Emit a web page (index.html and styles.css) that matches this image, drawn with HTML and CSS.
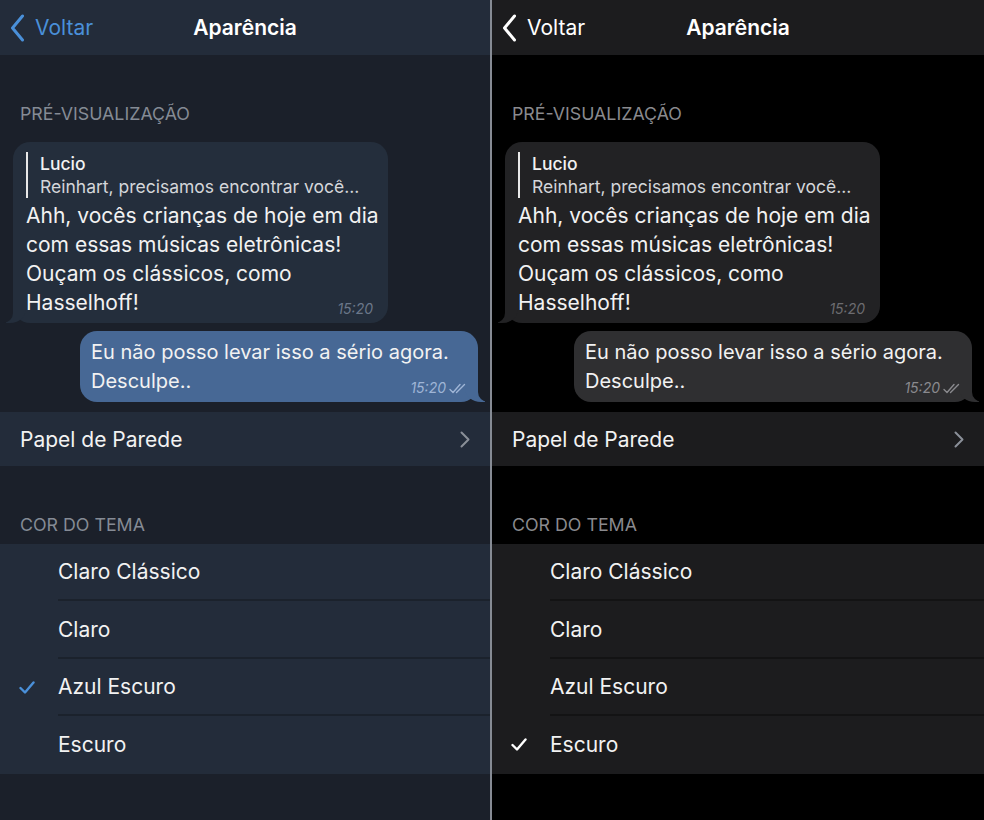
FILE: index.html
```html
<!DOCTYPE html>
<html lang="pt">
<head>
  <meta charset="UTF-8">
  <meta name="viewport" content="width=device-width, initial-scale=1.0">
  <title>Aparência</title>
  <link rel="stylesheet" href="styles.css">
</head>
<body>
  <div class="screen">
    <section class="panel theme-blue">
      <header class="nav">
        <a class="back" href="#">
          <svg width="15" height="28" viewBox="0 0 15 28"><path d="M12.5 2 L2.5 14 L12.5 26" fill="none" stroke="currentColor" stroke-width="3" stroke-linecap="round" stroke-linejoin="round"/></svg>
          Voltar
        </a>
        <h1>Aparência</h1>
        <span></span>
      </header>

      <div class="section-title first">PRÉ-VISUALIZAÇÃO</div>
      <div class="chat">
        <div class="bubble in">
          <div class="reply">
            <div class="reply-name">Lucio</div>
            <div class="reply-text">Reinhart, precisamos encontrar você...</div>
          </div>
          <div class="msg">Ahh, vocês crianças de hoje em dia<br>com essas músicas eletrônicas!<br>Ouçam os clássicos, como<br>Hasselhoff!</div>
          <span class="time">15:20</span>
        </div>
        <div class="bubble out">
          <div class="msg">Eu não posso levar isso a sério agora.<br>Desculpe..</div>
          <span class="time">15:20
            <svg width="19" height="11" viewBox="0 0 19 11"><path d="M1 6.5 L4 9.5 L11 1.5 M7.5 9.5 L15.5 1.5" fill="none" stroke="currentColor" stroke-width="1.4" stroke-linecap="round" stroke-linejoin="round"/></svg>
          </span>
        </div>
      </div>

      <div class="row link">
        <span>Papel de Parede</span>
        <svg width="10" height="17" viewBox="0 0 10 17"><path d="M1.5 1.5 L8.5 8.5 L1.5 15.5" fill="none" stroke="currentColor" stroke-width="2" stroke-linecap="round" stroke-linejoin="round"/></svg>
      </div>

      <div class="section-title">COR DO TEMA</div>
      <ul class="themes">
        <li><span class="check"></span><span class="label">Claro Clássico</span></li>
        <li><span class="check"></span><span class="label">Claro</span></li>
        <li class="selected"><span class="check"><svg width="16" height="13" viewBox="0 0 16 13"><path d="M1.5 7 L6 11.5 L14.5 1.5" fill="none" stroke="currentColor" stroke-width="2.4" stroke-linecap="round" stroke-linejoin="round"/></svg></span><span class="label">Azul Escuro</span></li>
        <li><span class="check"></span><span class="label">Escuro</span></li>
      </ul>
    </section>

    <div class="divider"></div>

    <section class="panel theme-dark">
      <header class="nav">
        <a class="back" href="#">
          <svg width="15" height="28" viewBox="0 0 15 28"><path d="M12.5 2 L2.5 14 L12.5 26" fill="none" stroke="currentColor" stroke-width="3" stroke-linecap="round" stroke-linejoin="round"/></svg>
          Voltar
        </a>
        <h1>Aparência</h1>
        <span></span>
      </header>

      <div class="section-title first">PRÉ-VISUALIZAÇÃO</div>
      <div class="chat">
        <div class="bubble in">
          <div class="reply">
            <div class="reply-name">Lucio</div>
            <div class="reply-text">Reinhart, precisamos encontrar você...</div>
          </div>
          <div class="msg">Ahh, vocês crianças de hoje em dia<br>com essas músicas eletrônicas!<br>Ouçam os clássicos, como<br>Hasselhoff!</div>
          <span class="time">15:20</span>
        </div>
        <div class="bubble out">
          <div class="msg">Eu não posso levar isso a sério agora.<br>Desculpe..</div>
          <span class="time">15:20
            <svg width="19" height="11" viewBox="0 0 19 11"><path d="M1 6.5 L4 9.5 L11 1.5 M7.5 9.5 L15.5 1.5" fill="none" stroke="currentColor" stroke-width="1.4" stroke-linecap="round" stroke-linejoin="round"/></svg>
          </span>
        </div>
      </div>

      <div class="row link">
        <span>Papel de Parede</span>
        <svg width="10" height="17" viewBox="0 0 10 17"><path d="M1.5 1.5 L8.5 8.5 L1.5 15.5" fill="none" stroke="currentColor" stroke-width="2" stroke-linecap="round" stroke-linejoin="round"/></svg>
      </div>

      <div class="section-title">COR DO TEMA</div>
      <ul class="themes">
        <li><span class="check"></span><span class="label">Claro Clássico</span></li>
        <li><span class="check"></span><span class="label">Claro</span></li>
        <li><span class="check"></span><span class="label">Azul Escuro</span></li>
        <li class="selected"><span class="check"><svg width="16" height="13" viewBox="0 0 16 13"><path d="M1.5 7 L6 11.5 L14.5 1.5" fill="none" stroke="currentColor" stroke-width="2.4" stroke-linecap="round" stroke-linejoin="round"/></svg></span><span class="label">Escuro</span></li>
      </ul>
    </section>
  </div>
</body>
</html>
```

FILE: styles.css
```css
* { margin: 0; padding: 0; box-sizing: border-box; }
body {
  font-family: Inter, "Liberation Sans", Arial, sans-serif;
  background: #000;
  color: #f2f2f2;
}
.screen {
  display: flex;
  width: 984px;
  height: 820px;
}

/* themes */
.theme-blue {
  --bg: #1b202a;
  --bar: #232c3a;
  --in: #242e3c;
  --out: #476895;
  --accent: #4a90d9;
  --hint: #858b95;
  --time-in: #6b7789;
  --time-out: #9fb5d6;
  --sep: #1b222c;
  --back: #4a90d9;
  width: 490px;
}
.theme-dark {
  --bg: #000000;
  --bar: #1c1c1e;
  --in: #222224;
  --out: #2f2f31;
  --accent: #ffffff;
  --hint: #8a8a8e;
  --time-in: #6c6c70;
  --time-out: #8a8a8e;
  --sep: #131314;
  --back: #ffffff;
  width: 492px;
}
.panel {
  background: var(--bg);
  height: 820px;
  overflow: hidden;
}
.divider {
  width: 2px;
  background: #868b94;
}

/* nav */
.nav {
  height: 55px;
  background: var(--bar);
  display: grid;
  grid-template-columns: 1fr auto 1fr;
  align-items: center;
}
.back {
  display: flex;
  align-items: center;
  gap: 10px;
  padding-left: 10px;
  color: var(--back);
  text-decoration: none;
  font-size: 21px;
}
.nav h1 {
  font-size: 21px;
  font-weight: 600;
  color: #fff;
}

.section-title {
  font-size: 17.8px;
  line-height: 20px;
  color: var(--hint);
  padding: 49px 20px 9px;
}
.section-title.first {
  padding-bottom: 18px;
}

/* chat preview */
.chat {
  display: flex;
  flex-direction: column;
  padding: 0 12px 0 13px;
}
.bubble {
  position: relative;
  border-radius: 17px;
  line-height: 29px;
  color: #f2f2f2;
  white-space: nowrap;
}
.bubble::before,
.bubble::after {
  content: "";
  position: absolute;
  bottom: 0;
  height: 22px;
}
.bubble.in {
  width: 375px;
  background: var(--in);
  padding: 10px 13px 6px;
  font-size: 21px;
}
.bubble.in::before {
  left: -7px;
  width: 20px;
  background: var(--in);
  border-bottom-right-radius: 16px 14px;
}
.bubble.in::after {
  left: -26px;
  width: 26px;
  background: var(--bg);
  border-bottom-right-radius: 10px;
}
.bubble.out {
  width: 398px;
  margin: 8px 0 0 auto;
  background: var(--out);
  padding: 7px 11px 6px;
  font-size: 20px;
}
.bubble.out::before {
  right: -7px;
  width: 20px;
  background: var(--out);
  border-bottom-left-radius: 16px 14px;
}
.bubble.out::after {
  right: -26px;
  width: 26px;
  background: var(--bg);
  border-bottom-left-radius: 10px;
}
.reply {
  border-left: 2px solid #e8e8e8;
  padding-left: 12px;
  font-size: 17.5px;
  line-height: 23px;
  margin-bottom: 3px;
}
.reply-name { font-weight: 500; }
.reply-text { color: #d4d6da; }
.time {
  position: absolute;
  right: 15px;
  bottom: 5px;
  font-size: 14px;
  line-height: 18px;
  font-style: italic;
  color: var(--time-in);
  display: flex;
  align-items: center;
  gap: 3px;
}
.bubble.out .time {
  right: 10px;
  color: var(--time-out);
}

/* settings rows */
.row {
  height: 54px;
  margin-top: 10px;
  background: var(--bar);
  display: flex;
  align-items: center;
  justify-content: space-between;
  padding: 0 20px;
  font-size: 21px;
}
.row svg { color: #8a8f98; }

.themes {
  list-style: none;
  background: var(--bar);
}
.themes li {
  display: grid;
  grid-template-columns: 58px 1fr;
  height: 57.4px;
  font-size: 21px;
}
.check {
  display: flex;
  align-items: center;
  padding-left: 19px;
  color: var(--accent);
}
.label {
  display: flex;
  align-items: center;
  border-bottom: 2px solid var(--sep);
}
.themes li:last-child .label { border-bottom: none; }
```
